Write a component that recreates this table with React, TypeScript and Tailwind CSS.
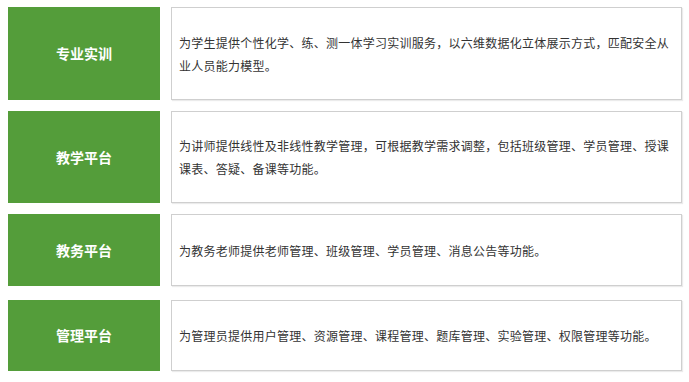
import React from "react";

const rows = [
  {
    title: "专业实训",
    desc: "为学生提供个性化学、练、测一体学习实训服务，以六维数据化立体展示方式，匹配安全从业人员能力模型。",
    h: "h-[93px]",
    mt: "mt-[7px]",
  },
  {
    title: "教学平台",
    desc: "为讲师提供线性及非线性教学管理，可根据教学需求调整，包括班级管理、学员管理、授课课表、答疑、备课等功能。",
    h: "h-[92px]",
    mt: "mt-[11px]",
  },
  {
    title: "教务平台",
    desc: "为教务老师提供老师管理、班级管理、学员管理、消息公告等功能。",
    h: "h-[72px]",
    mt: "mt-[11px]",
  },
  {
    title: "管理平台",
    desc: "为管理员提供用户管理、资源管理、课程管理、题库管理、实验管理、权限管理等功能。",
    h: "h-[71px]",
    mt: "mt-[14px]",
  },
];

export default function App() {
  return (
    <div
      className="w-[689px] h-[382px] bg-white flex flex-col"
      style={{ fontFamily: '"Noto Sans CJK SC", "Noto Sans", sans-serif' }}
    >
      {rows.map((r) => (
        <div key={r.title} className={`flex ${r.h} ${r.mt} pl-[8px]`}>
          <div className="w-[152px] bg-[#549d3a] flex items-center justify-center text-white font-bold text-[14px]">
            {r.title}
          </div>
          <div className="ml-[11px] w-[511px] border border-[#cfcfcf] shadow-[1px_1px_1px_rgba(0,0,0,0.08)] flex items-center pl-[7px] pr-[8px] text-[12px] leading-[23px] tracking-[0.25px] text-[#333]">
            <p>{r.desc}</p>
          </div>
        </div>
      ))}
    </div>
  );
}
